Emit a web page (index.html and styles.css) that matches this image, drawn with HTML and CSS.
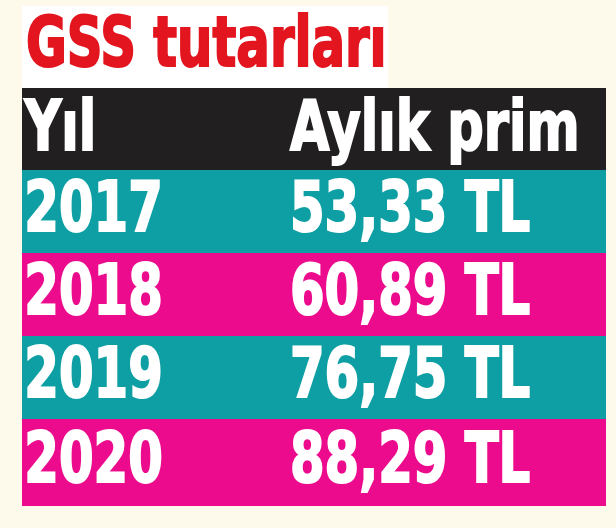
FILE: index.html
```html
<!DOCTYPE html>
<html>
<head>
    <meta charset="UTF-8">
    <title>GSS tutarları</title>
    <link rel="stylesheet" href="styles.css">
</head>
<body>

<div id="card">
    <div id="title"><span>GSS tutarları</span></div>
    <div id="table">
        <div class="row head"><span class="year">Yıl</span><span class="amount">Aylık prim</span></div>
        <div class="row teal"><span class="year">2017</span><span class="amount">53,33 TL</span></div>
        <div class="row pink"><span class="year">2018</span><span class="amount">60,89 TL</span></div>
        <div class="row teal"><span class="year">2019</span><span class="amount">76,75 TL</span></div>
        <div class="row pink"><span class="year">2020</span><span class="amount">88,29 TL</span></div>
    </div>
</div>

</body>
</html>
```

FILE: styles.css
```css
*, *::after, *::before {
    box-sizing: border-box;
}

html, body {
    background-color: #fdf9eb;
    height: 100%;
    width: 100%;
    padding: 0;
    margin: 0;
    font-family: "DejaVu Sans Condensed", "DejaVu Sans", sans-serif;
    font-weight: bold;
}

#card {
    padding: 6px 10px 0 22px;
}

#title {
    width: 366px;
    height: 82px;
    background: #fff;
    color: #e3151e;
    font-size: 70px;
    line-height: 72px;
    padding-left: 4px;
    white-space: nowrap;
}

/* squeeze the wide fallback font down to a condensed poster face */
#title span,
.row span {
    display: inline-block;
    flex-shrink: 0;
    transform: scaleX(0.79);
    transform-origin: left center;
    -webkit-text-stroke: 2px currentColor;
}

#table {
    width: 584px;
}

.row {
    display: flex;
    height: 83px;
    align-items: center;
    padding-bottom: 10px;
    color: #fff;
    font-size: 70px;
    white-space: nowrap;
}

.row .year {
    width: 268px;
    padding-left: 3px;
}

.head {
    height: 82px;
    padding-bottom: 6px;
    background: #211f1f;
}

.head span {
    transform: scaleX(0.81);
}

.teal {
    background: #0d9fa3;
}

.pink {
    background: #ec0b8c;
}

.row:last-child {
    height: 87px;
}
```
